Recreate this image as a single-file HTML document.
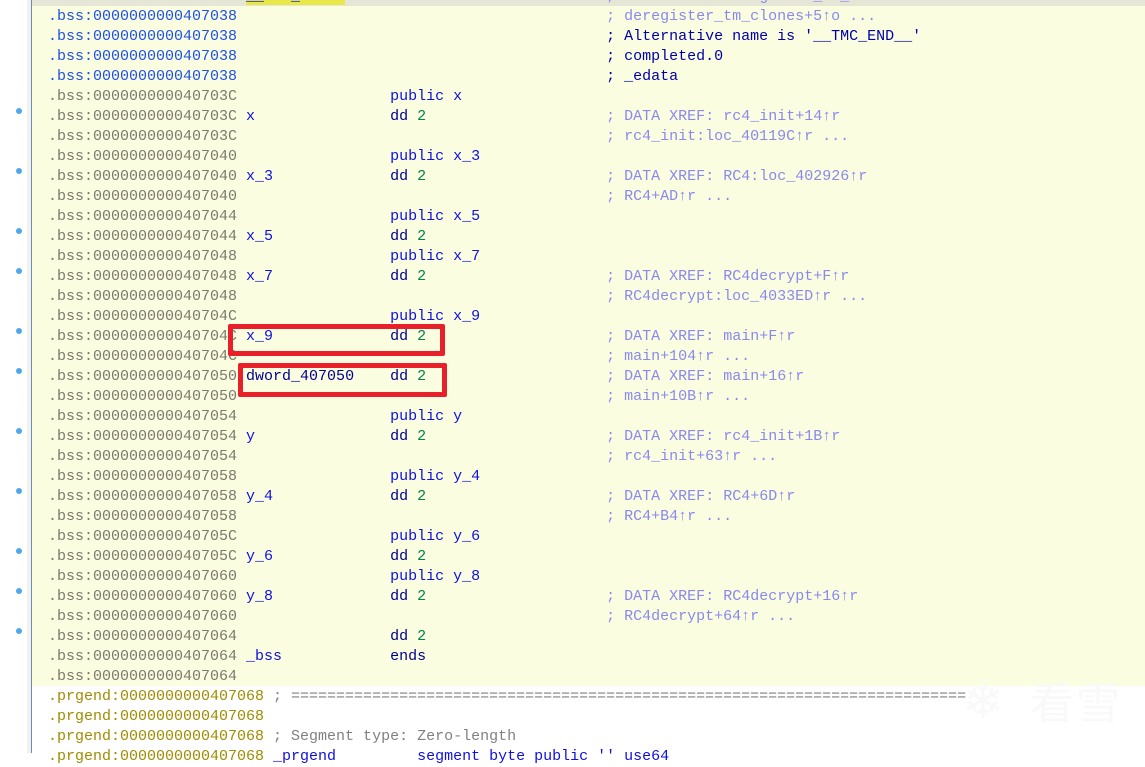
<!DOCTYPE html>
<html><head><meta charset="utf-8"><style>
html,body{margin:0;padding:0}
body{width:1145px;height:753px;overflow:hidden;background:#fff;position:relative;font-family:"Liberation Mono",monospace;font-size:15px}
#gut{position:absolute;left:27px;top:0;width:4px;height:753px;background:#f2f2ec}
#vl{position:absolute;left:31px;top:0;width:1px;height:753px;background:#6a8cc0}
#yel{position:absolute;left:32px;top:0;width:1113px;height:686px;background:#fbfde1}
#hl{position:absolute;left:32px;top:0;width:1113px;height:6px;background:#e6e6d6}
.r{position:absolute;left:48px;height:20px;line-height:20px;white-space:pre;color:#7c7a6c}
.b{color:#1e50e6}
.n{color:#1010e0}
.k{color:#000090}
.g{color:#00804a}
.c{color:#8a88ee}
.d{color:#0000a8}
.p{color:#a08c00}
.s{color:#808080}
.hi{background:#e8e84a}
.dot{position:absolute;left:16px;width:6px;height:6px;border-radius:50%;background:#4fa8e8}
.box{position:absolute;border:5px solid #e8202a;border-radius:2px;box-sizing:border-box}
</style></head><body>
<div id="gut"></div><div id="yel"></div><div id="hl"></div><div id="vl"></div>

<div class="r b" style="top:-13px">.bss:0000000000407038 <span class="n hi">__bss_start</span>     <span class="k">dd</span> <span class="g">2</span>                    <span class="c">; DATA XREF: deregister_tm_clones+0</span></div>
<div class="r b" style="top:7px">.bss:0000000000407038                                         <span class="c">; deregister_tm_clones+5↑o ...</span></div>
<div class="r b" style="top:27px">.bss:0000000000407038                                         <span class="d">; Alternative name is '__TMC_END__'</span></div>
<div class="r b" style="top:47px">.bss:0000000000407038                                         <span class="d">; completed.0</span></div>
<div class="r b" style="top:67px">.bss:0000000000407038                                         <span class="d">; _edata</span></div>
<div class="r" style="top:87px">.bss:000000000040703C                 <span class="n">public x</span></div>
<div class="r" style="top:107px">.bss:000000000040703C <span class="n">x</span>               <span class="k">dd</span> <span class="g">2</span>                    <span class="c">; DATA XREF: rc4_init+14↑r</span></div>
<div class="r" style="top:127px">.bss:000000000040703C                                         <span class="c">; rc4_init:loc_40119C↑r ...</span></div>
<div class="r" style="top:147px">.bss:0000000000407040                 <span class="n">public x_3</span></div>
<div class="r" style="top:167px">.bss:0000000000407040 <span class="n">x_3</span>             <span class="k">dd</span> <span class="g">2</span>                    <span class="c">; DATA XREF: RC4:loc_402926↑r</span></div>
<div class="r" style="top:187px">.bss:0000000000407040                                         <span class="c">; RC4+AD↑r ...</span></div>
<div class="r" style="top:207px">.bss:0000000000407044                 <span class="n">public x_5</span></div>
<div class="r" style="top:227px">.bss:0000000000407044 <span class="n">x_5</span>             <span class="k">dd</span> <span class="g">2</span></div>
<div class="r" style="top:247px">.bss:0000000000407048                 <span class="n">public x_7</span></div>
<div class="r" style="top:267px">.bss:0000000000407048 <span class="n">x_7</span>             <span class="k">dd</span> <span class="g">2</span>                    <span class="c">; DATA XREF: RC4decrypt+F↑r</span></div>
<div class="r" style="top:287px">.bss:0000000000407048                                         <span class="c">; RC4decrypt:loc_4033ED↑r ...</span></div>
<div class="r" style="top:307px">.bss:000000000040704C                 <span class="n">public x_9</span></div>
<div class="r" style="top:327px">.bss:000000000040704C <span class="n">x_9</span>             <span class="k">dd</span> <span class="g">2</span>                    <span class="c">; DATA XREF: main+F↑r</span></div>
<div class="r" style="top:347px">.bss:000000000040704C                                         <span class="c">; main+104↑r ...</span></div>
<div class="r" style="top:367px">.bss:0000000000407050 <span class="k">dword_407050</span>    <span class="k">dd</span> <span class="g">2</span>                    <span class="c">; DATA XREF: main+16↑r</span></div>
<div class="r" style="top:387px">.bss:0000000000407050                                         <span class="c">; main+10B↑r ...</span></div>
<div class="r" style="top:407px">.bss:0000000000407054                 <span class="n">public y</span></div>
<div class="r" style="top:427px">.bss:0000000000407054 <span class="n">y</span>               <span class="k">dd</span> <span class="g">2</span>                    <span class="c">; DATA XREF: rc4_init+1B↑r</span></div>
<div class="r" style="top:447px">.bss:0000000000407054                                         <span class="c">; rc4_init+63↑r ...</span></div>
<div class="r" style="top:467px">.bss:0000000000407058                 <span class="n">public y_4</span></div>
<div class="r" style="top:487px">.bss:0000000000407058 <span class="n">y_4</span>             <span class="k">dd</span> <span class="g">2</span>                    <span class="c">; DATA XREF: RC4+6D↑r</span></div>
<div class="r" style="top:507px">.bss:0000000000407058                                         <span class="c">; RC4+B4↑r ...</span></div>
<div class="r" style="top:527px">.bss:000000000040705C                 <span class="n">public y_6</span></div>
<div class="r" style="top:547px">.bss:000000000040705C <span class="n">y_6</span>             <span class="k">dd</span> <span class="g">2</span></div>
<div class="r" style="top:567px">.bss:0000000000407060                 <span class="n">public y_8</span></div>
<div class="r" style="top:587px">.bss:0000000000407060 <span class="n">y_8</span>             <span class="k">dd</span> <span class="g">2</span>                    <span class="c">; DATA XREF: RC4decrypt+16↑r</span></div>
<div class="r" style="top:607px">.bss:0000000000407060                                         <span class="c">; RC4decrypt+64↑r ...</span></div>
<div class="r" style="top:627px">.bss:0000000000407064                 <span class="k">dd</span> <span class="g">2</span></div>
<div class="r" style="top:647px">.bss:0000000000407064 <span class="n">_bss</span>            <span class="k">ends</span></div>
<div class="r" style="top:667px">.bss:0000000000407064</div>
<div class="r p" style="top:687px">.prgend:0000000000407068 <span class="s">; ===========================================================================</span></div>
<div class="r p" style="top:707px">.prgend:0000000000407068</div>
<div class="r p" style="top:727px">.prgend:0000000000407068 <span class="s">; Segment type: Zero-length</span></div>
<div class="r p" style="top:747px">.prgend:0000000000407068 <span class="n">_prgend</span>         <span class="n">segment byte public '' use64</span></div>

<div class="dot" style="top:108px"></div>
<div class="dot" style="top:168px"></div>
<div class="dot" style="top:228px"></div>
<div class="dot" style="top:268px"></div>
<div class="dot" style="top:328px"></div>
<div class="dot" style="top:368px"></div>
<div class="dot" style="top:428px"></div>
<div class="dot" style="top:488px"></div>
<div class="dot" style="top:548px"></div>
<div class="dot" style="top:588px"></div>
<div class="dot" style="top:628px"></div>

<div class="box" style="left:228px;top:324px;width:217px;height:32px"></div>
<div class="box" style="left:238px;top:363px;width:209px;height:34px"></div>

<div style="position:absolute;left:1030px;top:668px;font-family:'Noto Sans CJK SC',sans-serif;font-size:44px;color:rgba(248,248,248,0.9);letter-spacing:2px">看雪</div>
<div style="position:absolute;left:962px;top:672px;font-size:50px;color:rgba(248,248,248,0.9);font-family:'DejaVu Sans',sans-serif">❄</div>
</body></html>
